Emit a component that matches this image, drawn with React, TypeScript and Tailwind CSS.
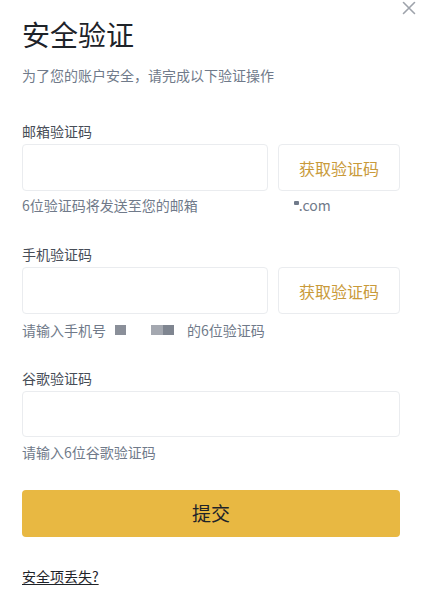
import React from "react";

export default function App() {
  const font = { fontFamily: '"Noto Sans CJK SC", "Noto Sans", sans-serif' };
  return (
    <div className="relative w-[428px] h-[599px] bg-white overflow-hidden" style={font}>
      <button className="absolute left-[400px] top-[-1px] w-[17px] h-[17px] flex items-center justify-center">
        <svg width="14" height="14" viewBox="0 0 14 14" fill="none" stroke="#9ea3ab" strokeWidth="1.6" strokeLinecap="round">
          <path d="M1.5 1.5L12.5 12.5M12.5 1.5L1.5 12.5" />
        </svg>
      </button>
      <div className="pl-[22px] pr-[28px] pt-[16px] flex flex-col">
        <h1 className="text-[28px] leading-[36px] text-[#1e2329] font-normal">安全验证</h1>
        <p className="mt-[13px] text-[14px] leading-[20px] text-[#707a8a]">为了您的账户安全，请完成以下验证操作</p>

        <label className="mt-[36px] text-[14px] leading-[20px] text-[#474d57]">邮箱验证码</label>
        <div className="mt-[3px] flex gap-[10px]">
          <div className="w-[246px] h-[47px] rounded-[4px] border border-[#eaecef]" />
          <button className="flex-1 h-[47px] rounded-[4px] border border-[#eaecef] text-[16px] text-[#c99a3a]">获取验证码</button>
        </div>
        <div className="mt-[4px] flex items-center text-[14px] leading-[20px] text-[#707a8a]">
          <span>6位验证码将发送至您的邮箱</span>
          <span className="ml-[96px] flex items-center">
            <span className="w-[5px] h-[4px] bg-[#707a8a] rounded-[1px] mt-[-4px]" />
            <span>.com</span>
          </span>
        </div>

        <label className="mt-[29px] text-[14px] leading-[20px] text-[#474d57]">手机验证码</label>
        <div className="mt-[3px] flex gap-[10px]">
          <div className="w-[246px] h-[47px] rounded-[4px] border border-[#eaecef]" />
          <button className="flex-1 h-[47px] rounded-[4px] border border-[#eaecef] text-[16px] text-[#c99a3a]">获取验证码</button>
        </div>
        <div className="mt-[6px] flex items-center text-[14px] leading-[20px] text-[#707a8a]">
          <span>请输入手机号</span>
          <span className="ml-[9px] w-[11px] h-[10px] bg-[#8a8f99]" />
          <span className="ml-[25px] w-[12px] h-[10px] bg-[#a4a8b0]" />
          <span className="w-[11px] h-[10px] bg-[#7f8590]" />
          <span className="ml-[13px]">的6位验证码</span>
        </div>

        <label className="mt-[28px] text-[14px] leading-[20px] text-[#474d57]">谷歌验证码</label>
        <div className="mt-[3px] h-[46px] rounded-[4px] border border-[#eaecef]" />
        <p className="mt-[5px] text-[14px] leading-[20px] text-[#707a8a]">请输入6位谷歌验证码</p>

        <button className="mt-[28px] h-[47px] rounded-[4px] bg-[#e8b842] text-[19px] text-[#1e2329]">提交</button>

        <a className="mt-[29px] self-start text-[14px] leading-[20px] text-[#1e2329] underline underline-offset-2">安全项丢失?</a>
      </div>
    </div>
  );
}
